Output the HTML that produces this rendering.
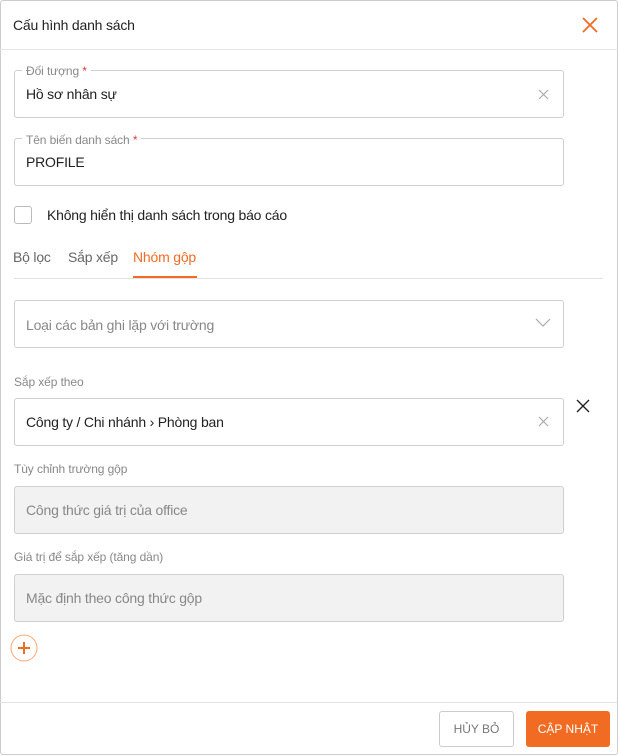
<!DOCTYPE html>
<html><head><meta charset="utf-8"><style>
*{box-sizing:border-box;margin:0;padding:0}
body{width:618px;height:756px;background:#fff;font-family:"Liberation Sans",sans-serif;color:#222;position:relative;overflow:hidden}
.abs{position:absolute}
.modal{position:absolute;left:0;top:0;width:618px;height:755px;border:1px solid #ccc;border-radius:3px;background:#fff}
.box{position:absolute;left:14px;width:550px;height:48px;border:1px solid #cfcfcf;border-radius:3px;background:#fff}
.grey{background:#f1f2f1}
.t{position:absolute;font-size:14px;white-space:nowrap;letter-spacing:-0.2px}
.lbl{position:absolute;font-size:12px;color:#888;white-space:nowrap;letter-spacing:-0.1px}
.req{color:#e53935}
</style></head><body>
<div class="modal"></div>
<div class="t" style="left:13px;top:17px;font-size:14px;color:#222">Cấu hình danh sách</div>
<svg class="abs" style="left:581px;top:16px" width="18" height="18"><path d="M2 2L16 16M16 2L2 16" stroke="#f26b22" stroke-width="1.8"/></svg>
<div class="abs" style="left:0;top:49px;width:618px;height:1px;background:#e6e6e6"></div>

<div class="box" style="top:70px"></div>
<div class="lbl" style="left:22px;top:64px;background:#fff;padding:0 4px">Đối tượng <span class="req">*</span></div>
<div class="t" style="left:26px;top:86px">Hồ sơ nhân sự</div>
<svg class="abs" style="left:538px;top:89px" width="11" height="11"><path d="M1 1L10 10M10 1L1 10" stroke="#aaa" stroke-width="1.2"/></svg>

<div class="box" style="top:138px"></div>
<div class="lbl" style="left:22px;top:133px;background:#fff;padding:0 4px">Tên biến danh sách <span class="req">*</span></div>
<div class="t" style="left:26px;top:154px">PROFILE</div>

<div class="abs" style="left:14px;top:206px;width:18px;height:18px;border:1px solid #bbb;border-radius:3px"></div>
<div class="t" style="left:47px;top:207px">Không hiển thị danh sách trong báo cáo</div>

<div class="t" style="left:13px;top:249px;color:#666">Bộ lọc</div>
<div class="t" style="left:68px;top:249px;color:#666">Sắp xếp</div>
<div class="t" style="left:133px;top:249px;color:#f26b22">Nhóm gộp</div>
<div class="abs" style="left:14px;top:278px;width:589px;height:1px;background:#e2e2e2"></div>
<div class="abs" style="left:133px;top:276px;width:64px;height:2px;background:#f26b22"></div>

<div class="box" style="top:300px"></div>
<div class="t" style="left:26px;top:317px;color:#888">Loại các bản ghi lặp với trường</div>
<svg class="abs" style="left:535px;top:318px" width="16" height="10"><path d="M1 1L8 8L15 1" stroke="#aaa" stroke-width="1.2" fill="none"/></svg>

<div class="lbl" style="left:14px;top:375px">Sắp xếp theo</div>
<div class="box" style="top:398px"></div>
<div class="t" style="left:26px;top:414px">Công ty / Chi nhánh › Phòng ban</div>
<svg class="abs" style="left:538px;top:416px" width="11" height="11"><path d="M1 1L10 10M10 1L1 10" stroke="#aaa" stroke-width="1.2"/></svg>
<svg class="abs" style="left:576px;top:399px" width="14" height="14"><path d="M1 1L13 13M13 1L1 13" stroke="#222" stroke-width="1.4"/></svg>

<div class="lbl" style="left:14px;top:462px">Tùy chỉnh trường gộp</div>
<div class="box grey" style="top:486px"></div>
<div class="t" style="left:26px;top:502px;color:#888">Công thức giá trị của office</div>

<div class="lbl" style="left:14px;top:550px">Giá trị để sắp xếp (tăng dần)</div>
<div class="box grey" style="top:574px"></div>
<div class="t" style="left:26px;top:590px;color:#888">Mặc định theo công thức gộp</div>

<svg class="abs" style="left:9px;top:634px" width="30" height="30"><circle cx="15" cy="14" r="13" fill="none" stroke="#f7a877" stroke-width="1"/><path d="M15 8V20M9 14H21" stroke="#f26b22" stroke-width="2"/></svg>

<div class="abs" style="left:0;top:702px;width:618px;height:1px;background:#e2e2e2"></div>
<div class="abs" style="left:439px;top:711px;width:75px;height:36px;border:1px solid #ccc;border-radius:3px;font-size:12px;color:#777;text-align:center;line-height:34px">HỦY BỎ</div>
<div class="abs" style="left:526px;top:711px;width:84px;height:36px;background:#f26b22;border-radius:3px;font-size:12px;color:#fff;text-align:center;line-height:36px">CẬP NHẬT</div>
</body></html>
